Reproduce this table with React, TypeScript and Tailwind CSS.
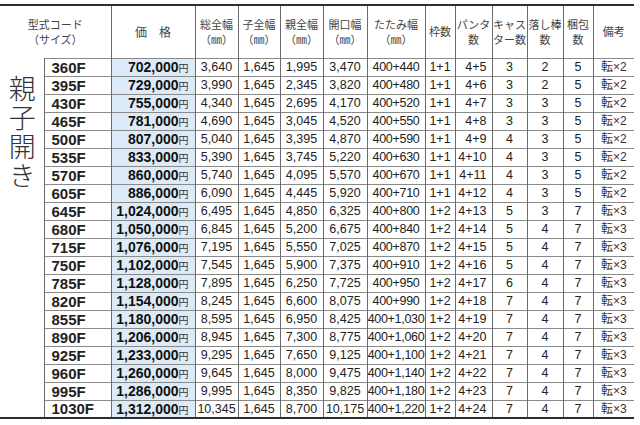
import React from 'react'

type Row = {
  code: string
  price: string
  total: string
  child: string
  parent: string
  opening: string
  folded: string
  frames: string
  panta: string
  caster: string
  bolt: string
  pack: string
  note: string
}

const raw: string[] = [
  '360F|702,000|3,640|1,645|1,995|3,470|400+440|1+1|4+5|3|2|5|転×2',
  '395F|729,000|3,990|1,645|2,345|3,820|400+480|1+1|4+6|3|2|5|転×2',
  '430F|755,000|4,340|1,645|2,695|4,170|400+520|1+1|4+7|3|3|5|転×2',
  '465F|781,000|4,690|1,645|3,045|4,520|400+550|1+1|4+8|3|3|5|転×2',
  '500F|807,000|5,040|1,645|3,395|4,870|400+590|1+1|4+9|4|3|5|転×2',
  '535F|833,000|5,390|1,645|3,745|5,220|400+630|1+1|4+10|4|3|5|転×2',
  '570F|860,000|5,740|1,645|4,095|5,570|400+670|1+1|4+11|4|3|5|転×2',
  '605F|886,000|6,090|1,645|4,445|5,920|400+710|1+1|4+12|4|3|5|転×2',
  '645F|1,024,000|6,495|1,645|4,850|6,325|400+800|1+2|4+13|5|3|7|転×3',
  '680F|1,050,000|6,845|1,645|5,200|6,675|400+840|1+2|4+14|5|4|7|転×3',
  '715F|1,076,000|7,195|1,645|5,550|7,025|400+870|1+2|4+15|5|4|7|転×3',
  '750F|1,102,000|7,545|1,645|5,900|7,375|400+910|1+2|4+16|5|4|7|転×3',
  '785F|1,128,000|7,895|1,645|6,250|7,725|400+950|1+2|4+17|6|4|7|転×3',
  '820F|1,154,000|8,245|1,645|6,600|8,075|400+990|1+2|4+18|7|4|7|転×3',
  '855F|1,180,000|8,595|1,645|6,950|8,425|400+1,030|1+2|4+19|7|4|7|転×3',
  '890F|1,206,000|8,945|1,645|7,300|8,775|400+1,060|1+2|4+20|7|4|7|転×3',
  '925F|1,233,000|9,295|1,645|7,650|9,125|400+1,100|1+2|4+21|7|4|7|転×3',
  '960F|1,260,000|9,645|1,645|8,000|9,475|400+1,140|1+2|4+22|7|4|7|転×3',
  '995F|1,286,000|9,995|1,645|8,350|9,825|400+1,180|1+2|4+23|7|4|7|転×3',
  '1030F|1,312,000|10,345|1,645|8,700|10,175|400+1,220|1+2|4+24|7|4|7|転×3',
]

const rows: Row[] = raw.map((line) => {
  const [code, price, total, child, parent, opening, folded, frames, panta, caster, bolt, pack, note] = line.split('|')
  return { code, price, total, child, parent, opening, folded, frames, panta, caster, bolt, pack, note }
})

// header and body cell styles
const th = 'border-l border-[#6b6b6b] p-0 font-normal text-[11px] leading-[15px] text-[#444] align-middle text-center'
const td = 'border-l border-t border-l-[#6b6b6b] border-t-[#8a8a8a] p-0 h-[18px] leading-none align-middle text-[12.5px] text-[#222] whitespace-nowrap overflow-hidden'

export default function App() {
  return (
    <div className="w-[640px] h-[425px] bg-white overflow-hidden pt-[4px] font-['Liberation_Sans','Noto_Sans_CJK_JP',sans-serif]">
      <table className="w-[634px] table-fixed border-collapse border-t-2 border-b-2 border-[#2e2e2e]">
        <colgroup>
          <col className="w-[44px]" />
          <col className="w-[67px]" />
          <col className="w-[84px]" />
          <col className="w-[43px]" />
          <col className="w-[42px]" />
          <col className="w-[43px]" />
          <col className="w-[44px]" />
          <col className="w-[58px]" />
          <col className="w-[30px]" />
          <col className="w-[37px]" />
          <col className="w-[35px]" />
          <col className="w-[36px]" />
          <col className="w-[30px]" />
          <col className="w-[41px]" />
        </colgroup>
        <thead className="font-['Noto_Sans_CJK_JP',sans-serif]">
          <tr className="h-[53px]">
            <th colSpan={2} className="p-0 font-normal text-[11px] leading-[15px] text-[#444] text-center">
              型式コード
              <br />
              （サイズ）
            </th>
            <th className={`${th} text-[12px]`}>価　格</th>
            <th className={th}>総全幅<br />（㎜）</th>
            <th className={th}>子全幅<br />（㎜）</th>
            <th className={th}>親全幅<br />（㎜）</th>
            <th className={th}>開口幅<br />（㎜）</th>
            <th className={th}>たたみ幅<br />（㎜）</th>
            <th className={th}>枠数</th>
            <th className={th}>パンタ<br />数</th>
            <th className={th}>キャス<br />ター数</th>
            <th className={th}>落し棒<br />数</th>
            <th className={th}>梱包<br />数</th>
            <th className={th}>備考</th>
          </tr>
        </thead>
        <tbody>
          {rows.map((r, i) => (
            <tr key={r.code}>
              {i === 0 && (
                <td rowSpan={rows.length} className="p-0 align-top">
                  {/* vertical label */}
                  <div className="flex justify-center pt-[17px]">
                    <span className="block h-[118px] [writing-mode:vertical-rl] font-['Noto_Sans_CJK_JP',sans-serif] font-light text-[27px] leading-[30px] tracking-[2px] text-[#333]">
                      親子開き
                    </span>
                  </div>
                </td>
              )}
              <td className={`${td} pl-[7px] text-left font-bold text-[15px] text-[#111]`}>{r.code}</td>
              <td className={`${td} bg-[#dcebf7] pr-[6px] text-right`}>
                <span className="font-bold text-[14px] text-[#111]">{r.price}</span>
                <span className="font-['Noto_Sans_CJK_JP',sans-serif] text-[10px] text-[#333]">円</span>
              </td>
              <td className={`${td} text-center`}>{r.total}</td>
              <td className={`${td} text-center`}>{r.child}</td>
              <td className={`${td} text-center`}>{r.parent}</td>
              <td className={`${td} text-center`}>{r.opening}</td>
              <td className={`${td} text-center tracking-[-0.3px]`}>{r.folded}</td>
              <td className={`${td} text-center`}>{r.frames}</td>
              <td className={`${td} pr-[5px] text-right`}>{r.panta}</td>
              <td className={`${td} text-center`}>{r.caster}</td>
              <td className={`${td} text-center`}>{r.bolt}</td>
              <td className={`${td} text-center`}>{r.pack}</td>
              <td className={`${td} text-center text-[12px] text-[#333]`}>{r.note}</td>
            </tr>
          ))}
        </tbody>
      </table>
    </div>
  )
}
